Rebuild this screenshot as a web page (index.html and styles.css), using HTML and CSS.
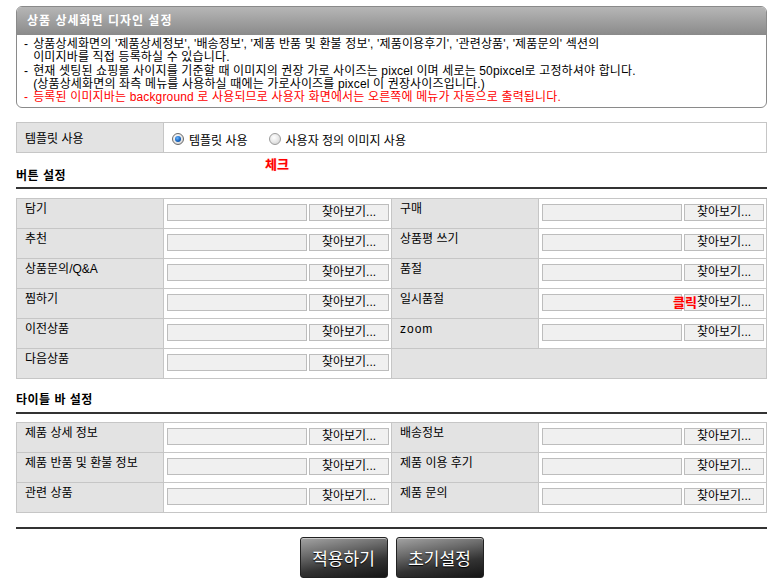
FILE: index.html
```html
<!DOCTYPE html>
<html lang="ko">
<head>
<meta charset="utf-8">
<title>상품 상세화면 디자인 설정</title>
<link rel="stylesheet" href="styles.css">
</head>
<body>
<div class="wrap">
  <div class="notice">
    <div class="notice-head">상품 상세화면 디자인 설정</div>
    <div class="notice-body">
      <p class="li">- <span>상품상세화면의 '제품상세정보', '배송정보', '제품 반품 및 환불 정보', '제품이용후기', '관련상품', '제품문의' 섹션의<br>이미지바를 직접 등록하실 수 있습니다.</span></p>
      <p class="li">- <span>현재 셋팅된 쇼핑몰 사이지를 기준할 때 이미지의 권장 가로 사이즈는 pixcel 이며 세로는 50pixcel로 고정하셔야 합니다.<br>(상품상세화면의 좌측 메뉴를 사용하실 때에는 가로사이즈를 pixcel 이 권장사이즈입니다.)</span></p>
      <p class="li red">- <span>등록된 이미지바는 background 로 사용되므로 사용자 화면에서는 오른쪽에 메뉴가 자동으로 출력됩니다.</span></p>
    </div>
  </div>

  <div class="tpl">
    <div class="tpl-label">템플릿 사용</div>
    <div class="tpl-value">
      <label class="opt"><span class="radio on"></span>템플릿 사용</label>
      <label class="opt"><span class="radio"></span>사용자 정의 이미지 사용</label>
      <span class="note note-check">체크</span>
    </div>
  </div>

  <h3 class="sec">버튼 설정</h3>
  <div class="grid">
    <div class="lab">담기</div><div class="val"><span class="file"></span><span class="browse">찾아보기...</span></div>
    <div class="lab">구매</div><div class="val"><span class="file"></span><span class="browse">찾아보기...</span></div>
    <div class="lab">추천</div><div class="val"><span class="file"></span><span class="browse">찾아보기...</span></div>
    <div class="lab">상품평 쓰기</div><div class="val"><span class="file"></span><span class="browse">찾아보기...</span></div>
    <div class="lab">상품문의/Q&amp;A</div><div class="val"><span class="file"></span><span class="browse">찾아보기...</span></div>
    <div class="lab">품절</div><div class="val"><span class="file"></span><span class="browse">찾아보기...</span></div>
    <div class="lab">찜하기</div><div class="val"><span class="file"></span><span class="browse">찾아보기...</span></div>
    <div class="lab">일시품절</div><div class="val note-host"><span class="file"></span><span class="browse">찾아보기...</span><span class="note note-click">클릭</span></div>
    <div class="lab">이전상품</div><div class="val"><span class="file"></span><span class="browse">찾아보기...</span></div>
    <div class="lab lab-wide">zoom</div><div class="val"><span class="file"></span><span class="browse">찾아보기...</span></div>
    <div class="lab">다음상품</div><div class="val"><span class="file"></span><span class="browse">찾아보기...</span></div>
    <div class="lab empty"></div>
  </div>

  <h3 class="sec sec2">타이틀 바 설정</h3>
  <div class="grid">
    <div class="lab">제품 상세 정보</div><div class="val"><span class="file"></span><span class="browse">찾아보기...</span></div>
    <div class="lab">배송정보</div><div class="val"><span class="file"></span><span class="browse">찾아보기...</span></div>
    <div class="lab">제품 반품 및 환불 정보</div><div class="val"><span class="file"></span><span class="browse">찾아보기...</span></div>
    <div class="lab">제품 이용 후기</div><div class="val"><span class="file"></span><span class="browse">찾아보기...</span></div>
    <div class="lab">관련 상품</div><div class="val"><span class="file"></span><span class="browse">찾아보기...</span></div>
    <div class="lab">제품 문의</div><div class="val"><span class="file"></span><span class="browse">찾아보기...</span></div>
  </div>

  <div class="footer">
    <button class="btn">적용하기</button>
    <button class="btn">초기설정</button>
  </div>
</div>
</body>
</html>
```
FILE: styles.css
```css
* { box-sizing: border-box; }
html, body { margin: 0; padding: 0; background: #fff; }
body {
  font-family: "Liberation Sans", "Noto Sans CJK KR", sans-serif;
  font-size: 12px;
  color: #000;
}
.wrap {
  width: 751px;
  margin: 6px 0 0 16px;
  position: relative;
}

/* notice box */
.notice {
  height: 102px;
  border: 1px solid #8a8a8a;
  border-radius: 6px;
  overflow: hidden;
}
.notice-head {
  height: 28px;
  background: linear-gradient(#b6b6b6, #8a8a8a);
  color: #fff;
  font-weight: bold;
  font-size: 12px;
  line-height: 28px;
  padding-left: 10px;
  letter-spacing: 1px;
}
.notice-body {
  padding: 3px 0 0 7px;
  line-height: 13.3px;
  letter-spacing: 0.15px;
}
.li {
  margin: 0;
  display: flex;
}
.li > span { padding-left: 5px; }
.red { color: #f00; }

/* template row */
.tpl {
  display: flex;
  height: 31px;
  margin-top: 14px;
  border: 1px solid #c6c6c6;
}
.tpl-label {
  width: 147px;
  background: #e3e3e3;
  border-right: 1px solid #c6c6c6;
  padding-left: 8px;
  display: flex;
  align-items: center;
}
.tpl-value {
  flex: 1;
  display: flex;
  align-items: center;
  padding: 3px 0 0 8px;
  position: relative;
}
.opt {
  display: flex;
  align-items: center;
  margin-right: 21px;
}
.radio {
  width: 12px;
  height: 12px;
  border-radius: 50%;
  border: 1px solid #9c9c9c;
  background: radial-gradient(circle at 40% 35%, #ffffff 0, #e8e8e8 50%, #c8c8c8 100%);
  margin-right: 5px;
  position: relative;
}
.radio.on {
  border-color: #6a6a6a;
}
.radio.on::after {
  content: "";
  position: absolute;
  left: 2px;
  top: 2px;
  width: 6px;
  height: 6px;
  border-radius: 50%;
  background: radial-gradient(circle at 40% 35%, #6cb6ff 0, #1766c0 55%, #0a3f86 100%);
}

/* annotations */
.note {
  position: absolute;
  color: #f00;
  font-weight: bold;
  font-size: 13px;
  font-family: "Noto Sans CJK KR", sans-serif;
  text-shadow: 0 0 1px #ffb0b0;
}
.note-check { left: 101px; top: 31px; }
.note-host { position: relative; }
.note-click { left: 134px; top: 3px; }

/* section titles */
.sec {
  margin: 0;
  padding: 16px 0 4px 0;
  font-size: 12px;
  line-height: 14px;
  font-weight: bold;
  letter-spacing: 0.5px;
  border-bottom: 2px solid #333;
}
.sec2 { padding-top: 14px; padding-bottom: 5px; }

/* grid */
.grid {
  margin-top: 9px;
  display: grid;
  grid-template-columns: 148px 228px 147px 228px;
  grid-auto-rows: 30px;
  border-top: 1px solid #c6c6c6;
}
.sec2 + .grid { margin-top: 8px; }
.lab, .val {
  border-right: 1px solid #c6c6c6;
  border-bottom: 1px solid #c6c6c6;
}
.lab {
  background: #e3e3e3;
  padding: 3px 0 0 8px;
  line-height: 14px;
}
.lab-wide { letter-spacing: 1px; }
.grid > .lab:nth-child(4n+1) {
  border-left: 1px solid #c6c6c6;
}
.lab.empty { grid-column: span 2; }
.val {
  display: flex;
  align-items: flex-start;
  padding: 5px 0 0 3px;
  background: #fff;
}
.file {
  width: 140px;
  height: 17px;
  background: #f0f0f0;
  border: 1px solid #bdbdbd;
}
.browse {
  width: 80px;
  height: 17px;
  margin-left: 2px;
  background: #f0f0f0;
  border: 1px solid #bdbdbd;
  text-align: center;
  line-height: 15px;
  font-size: 12px;
}

/* footer */
.footer {
  margin-top: 14px;
  border-top: 2px solid #333;
  padding-top: 8px;
  display: flex;
  justify-content: center;
  gap: 8px;
}
.btn {
  width: 88px;
  height: 41px;
  border: 1px solid #222;
  border-radius: 3px;
  background: linear-gradient(170deg, #a4a4a4 0%, #6a6a6a 35%, #333 65%, #151515 100%);
  color: #fff;
  font-family: "Noto Sans CJK KR", sans-serif;
  font-size: 17px;
  text-shadow: 0 1px 1px #000;
  padding: 0;
  box-shadow: inset 0 1px 0 #c8c8c8;
}
```
